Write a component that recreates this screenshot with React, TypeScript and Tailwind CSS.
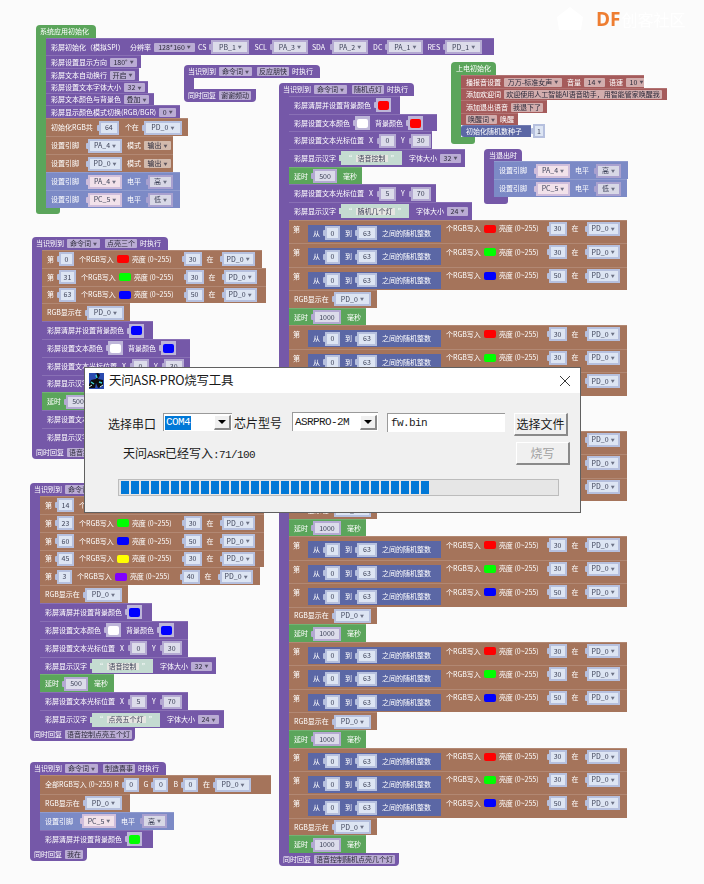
import React from 'react';

const tones = {
  violet: ['bg-[#b4a9d2]', 'bg-[#dcdcea]'],
  ice: ['bg-[#b6c0de]', 'bg-[#dde5f3]'],
  pink: ['bg-[#d0bedb]', 'bg-[#f2e2ea]'],
  lilac: ['bg-[#a9a1cf]', 'bg-[#d8d8e6]'],
  mint: ['bg-[#c4dbd1]', 'bg-[#e6e6e2]'],
};

type Tone = keyof typeof tones;

const L = ({ children, cls = '' }: { children: React.ReactNode; cls?: string }) => (
  <span className={`text-white text-[7px] leading-none whitespace-nowrap shrink-0 ${cls}`}>{children}</span>
);

const Arrow = () => <span className="text-[4px] leading-none opacity-70">▼</span>;

// plain dropdown sitting right on the block
const Dd = ({ t, cls = '', arrow = true }: { t: string; cls?: string; arrow?: boolean }) => (
  <span className={`flex items-center justify-center gap-[2px] h-[9px] px-[2px] rounded-[1px] bg-white/50 text-[#2c2a3a] text-[7px] leading-none whitespace-nowrap shrink-0 ${cls}`}>
    {t}
    {arrow && <Arrow />}
  </span>
);

// plugged in shadow block with its inner field
const Sh = ({ t, cls = 'w-[16px]', tone = 'ice', arrow = false }: { t: string; cls?: string; tone?: Tone; arrow?: boolean }) => (
  <span className="flex items-center shrink-0">
    <span className={`w-[2px] h-[6px] rounded-l-[1px] ${tones[tone][0]}`} />
    <span className={`flex items-center justify-center h-[14px] px-[2px] ${tones[tone][0]} ${cls}`}>
      <span className={`flex items-center justify-center gap-[2px] w-full h-[10px] text-[#3d4258] text-[7px] leading-none whitespace-nowrap ${tones[tone][1]}`}>
        {t}
        {arrow && <Arrow />}
      </span>
    </span>
  </span>
);

const Swatch = ({ c }: { c: string }) => <span className={`w-[12px] h-[8px] rounded-[2px] shrink-0 ${c}`} />;

const Picked = ({ c }: { c: string }) => (
  <span className="flex items-center shrink-0">
    <span className="w-[2px] h-[6px] rounded-l-[1px] bg-[#bdb5d8]" />
    <span className="flex items-center justify-center w-[15px] h-[14px] bg-[#bdb5d8]">
      <span className={`w-[11px] h-[9px] rounded-[2px] ${c}`} />
    </span>
  </span>
);

const Row = ({ cls, children }: { cls: string; children: React.ReactNode }) => (
  <div className={`flex items-center gap-[3px] pl-[5px] shrink-0 border-t border-white/15 ${cls}`}>{children}</div>
);

const Clear = ({ c, cls }: { c: string; cls: string }) => (
  <Row cls={`bg-[#7558a8] ${cls}`}>
    <L>彩屏清屏并设置背景颜色</L>
    <Picked c={c} />
  </Row>
);

const TextColor = ({ c, cls }: { c: string; cls: string }) => (
  <Row cls={`bg-[#7558a8] ${cls}`}>
    <L>彩屏设置文本颜色</L>
    <Picked c="bg-white" />
    <L cls="ml-[2px]">背景颜色</L>
    <Picked c={c} />
  </Row>
);

const Cursor = ({ x, y, cls }: { x: string; y: string; cls: string }) => (
  <Row cls={`bg-[#7558a8] ${cls}`}>
    <L>彩屏设置文本光标位置</L>
    <L cls="ml-[2px] mr-[1px]">X</L>
    <Sh t={x} tone="violet" cls="w-[17px]" />
    <L cls="ml-[2px] mr-[1px]">Y</L>
    <Sh t={y} tone="violet" cls="w-[20px]" />
  </Row>
);

const Han = ({ t, size, w, cls }: { t: string; size: string; w: string; cls: string }) => (
  <Row cls={`bg-[#7558a8] ${cls}`}>
    <L>彩屏显示汉字</L>
    <span className="flex items-center shrink-0">
      <span className="w-[2px] h-[6px] bg-[#c4dbd1]" />
      <span className={`flex items-center justify-between h-[14px] px-[4px] bg-[#c4dbd1] text-white text-[7px] leading-none ${w}`}>
        “<span className="px-[2px] bg-[#e6e6e2] text-[#3d4258] whitespace-nowrap">{t}</span>”
      </span>
    </span>
    <L cls="ml-[4px]">字体大小</L>
    <Dd t={size} cls="w-[21px]" />
  </Row>
);

const Delay = ({ t, w, cls }: { t: string; w: string; cls: string }) => (
  <Row cls={`bg-[#5ba55b] ${cls}`}>
    <L>延时</L>
    <Sh t={t} tone="violet" cls={w} />
    <L cls="ml-[3px]">毫秒</L>
  </Row>
);

const RgbShow = ({ cls }: { cls: string }) => (
  <Row cls={`bg-[#a5745b] ${cls}`}>
    <L>RGB显示在</L>
    <Sh t="PD_0" cls="w-[37px]" arrow />
  </Row>
);

const Pin = ({ p, lv, cls }: { p: string; lv: string; cls: string }) => (
  <Row cls={`bg-[#7c8ac6] ${cls}`}>
    <L cls="mr-[4px]">设置引脚</L>
    <Sh t={p} tone="pink" cls="w-[34px]" arrow />
    <L cls="ml-[2px] mr-[2px]">电平</L>
    <Sh t={lv} tone="lilac" cls="w-[25px]" arrow />
  </Row>
);

const Mode = ({ p, cls }: { p: string; cls: string }) => (
  <Row cls={`bg-[#a5745b] ${cls}`}>
    <L cls="mr-[4px]">设置引脚</L>
    <Sh t={p} cls="w-[34px]" arrow />
    <L cls="ml-[2px]">模式</L>
    <Dd t="输出" cls="w-[27px]" />
  </Row>
);

const Led = ({ n, c, v, w = 'w-[17px]', cls }: { n: string; c: string; v: string; w?: string; cls: string }) => (
  <Row cls={`bg-[#a5745b] ${cls}`}>
    <L>第</L>
    <Sh t={n} cls={w} />
    <L cls="ml-[2px]">个RGB写入</L>
    <Swatch c={c} />
    <L cls="mr-[7px]">亮度 (0~255)</L>
    <Sh t={v} cls="w-[18px]" />
    <L cls="ml-[2px] mr-[3px]">在</L>
    <Sh t="PD_0" cls="w-[33px]" arrow />
  </Row>
);

const Rand = ({ c, v }: { c: string; v: string }) => (
  <div className="flex items-start w-[338px] h-[23.4px] pl-[4px] pt-[4px] shrink-0 bg-[#a5745b] border-t border-white/15">
    <L cls="w-[15px] pt-[1px]">第</L>
    <div className="flex items-center gap-[3px] w-[133px] h-[17px] pl-[5px] shrink-0 bg-[#5b67a5]">
      <L>从</L>
      <Sh t="0" cls="w-[15px]" />
      <L cls="ml-[2px]">到</L>
      <Sh t="63" cls="w-[20px]" />
      <L cls="ml-[2px]">之间的随机整数</L>
    </div>
    <div className="flex items-center gap-[3px] pl-[5px] -mt-[3px]">
      <L>个RGB写入</L>
      <Swatch c={c} />
      <L cls="mr-[5px]">亮度 (0~255)</L>
      <Sh t={v} cls="w-[18px]" />
      <L cls="ml-[2px] mr-[3px]">在</L>
      <Sh t="PD_0" cls="w-[33px]" arrow />
    </div>
  </div>
);

const RandGroup = () => (
  <>
    <Rand c="bg-[#ff0000]" v="30" />
    <Rand c="bg-[#00ff00]" v="30" />
    <Rand c="bg-[#0000ff]" v="50" />
    <RgbShow cls="w-[88px] h-[17.7px]" />
    <Delay t="1000" w="w-[28px]" cls="w-[77px] h-[17.7px]" />
  </>
);

const Stack = ({ pos, color, head, foot, children }: {
  pos: string;
  color: string;
  head: React.ReactNode;
  foot: React.ReactNode;
  children: React.ReactNode;
}) => (
  <div className={`absolute flex flex-col items-start ${pos}`}>
    {head}
    <div className="flex items-stretch">
      <div className={`w-[10px] shrink-0 ${color}`} />
      <div className="flex flex-col items-start">{children}</div>
    </div>
    {foot}
  </div>
);

const Head = ({ cmd, act, cls }: { cmd: string; act: string; cls: string }) => (
  <div className={`flex items-center gap-[3px] pl-[4px] h-[13px] rounded-t-[4px] bg-[#7558a8] ${cls}`}>
    <L>当识别到</L>
    <Dd t={cmd} cls="w-[33px]" />
    <Dd t={act} arrow={false} cls="ml-[2px]" />
    <L>时执行</L>
  </div>
);

const Foot = ({ t, cls }: { t: string; cls: string }) => (
  <div className={`flex items-center gap-[3px] pl-[4px] h-[13px] rounded-b-[4px] bg-[#7558a8] ${cls}`}>
    <L>同时回复</L>
    <Dd t={t} arrow={false} />
  </div>
);

const RaisedArrow = ({ cls }: { cls: string }) => (
  <span className={`flex items-center justify-center h-[15px] bg-[#f0f0f0] border-t border-l border-white border-r-2 border-b-2 border-r-[#8a8a8a] border-b-[#8a8a8a] shrink-0 ${cls}`}>
    <span className="w-0 h-0 border-x-[4px] border-x-transparent border-t-[4px] border-t-black" />
  </span>
);

const Burner = () => (
  <div className="absolute left-[84px] top-[367px] flex flex-col w-[497px] h-[146px] bg-[#f0f0f0] border border-[#606060] font-['Noto_Sans_CJK_SC','Noto_Sans',sans-serif] text-[#1a1a1a]">
    <div className="flex items-center h-[25px] pl-[3px] pr-[10px] bg-white shrink-0">
      <svg viewBox="0 0 16 16" className="w-[16px] h-[16px] shrink-0">
        <rect x="1" y="0" width="15" height="16" fill="#2b4bb0" />
        <path d="M7 1 L9 1 L8 6 L3 7 L1 12 L1 15 L7 15 L8 10 L10 15 L15 13 L15 7 L10 6 L12 2 L10 0 Z" fill="#0c0c0c" />
        <path d="M3 9 L6 11 M11 9 L14 10 M8 2 L9 5" stroke="#3fd6d6" strokeWidth="1.4" />
        <path d="M1 14 L4 12 M12 14 L15 12" stroke="#d8f4f4" strokeWidth="1" />
      </svg>
      <span className="ml-[5px] text-[12.5px] tracking-[-0.2px] leading-none whitespace-nowrap">天问ASR-PRO烧写工具</span>
      <svg viewBox="0 0 10 10" className="ml-auto w-[10px] h-[10px] shrink-0" stroke="#222" strokeWidth="0.9" fill="none">
        <path d="M0 0 L10 10 M10 0 L0 10" />
      </svg>
    </div>
    <div className="flex items-start h-[24px] mt-[20px] pl-[23px]">
      <span className="w-[55px] mt-[2px] text-[12px] leading-[18px] shrink-0">选择串口</span>
      <div className="flex items-center justify-between w-[69px] h-[18px] pl-[1px] pr-[1px] bg-white border-t border-l border-[#9a9a9a] shrink-0">
        <span className="flex items-center w-[26px] h-[14px] pl-[1px] bg-[#0078d7] text-white font-['Liberation_Mono',monospace] text-[11px] tracking-[-0.6px] leading-none">COM4</span>
        <RaisedArrow cls="w-[17px]" />
      </div>
      <span className="w-[58px] ml-[2px] mt-[1px] text-[12px] leading-[18px] shrink-0">芯片型号</span>
      <div className="flex items-center justify-between w-[86px] h-[19px] pl-[2px] pr-[1px] bg-white border-t border-l border-[#9a9a9a] shrink-0 -mt-[1px]">
        <span className="font-['Liberation_Mono',monospace] text-[11px] tracking-[-0.6px] leading-none">ASRPRO-2M</span>
        <RaisedArrow cls="w-[17px]" />
      </div>
      <div className="flex items-center w-[118px] h-[19px] ml-[9px] pl-[3px] bg-white border-t border-l border-[#9a9a9a] font-['Liberation_Mono',monospace] text-[11px] tracking-[-0.6px] leading-none shrink-0">fw.bin</div>
      <button className="flex items-center justify-center w-[54px] h-[23px] ml-[9px] bg-[#f0f0f0] border-t border-l border-white border-r-2 border-b-2 border-r-[#8a8a8a] border-b-[#8a8a8a] text-[12px] leading-none shrink-0">选择文件</button>
    </div>
    <div className="flex items-start h-[23px] mt-[5px] pl-[38px]">
      <span className="w-[393px] mt-[2px] text-[12px] leading-[18px] whitespace-nowrap shrink-0">
        天问<span className="font-['Liberation_Mono',monospace] text-[11px] tracking-[-0.6px]">ASR</span>已经写入<span className="font-['Liberation_Mono',monospace] text-[11px] tracking-[-0.6px]">:71/100</span>
      </span>
      <button className="flex items-center justify-center w-[54px] h-[23px] bg-[#f0f0f0] border-t border-l border-white border-r-2 border-b-2 border-r-[#8a8a8a] border-b-[#8a8a8a] text-[#a0a0a0] text-[12px] leading-none shrink-0">烧写</button>
    </div>
    <div className="flex items-center gap-[2px] w-[441px] h-[17px] mt-[14px] ml-[33px] pl-[2px] bg-[#e6e6e6] border border-[#bcbcbc] shrink-0">
      {Array.from({ length: 31 }).map((_, i) => (
        <span key={i} className="w-[8px] h-[13px] bg-[#0078d7] shrink-0" />
      ))}
    </div>
  </div>
);

export default function App() {
  return (
    <div className="relative w-[704px] h-[884px] overflow-hidden bg-[#fbfbfb] font-['Noto_Sans_CJK_SC','Noto_Sans',sans-serif]">
      <div className="blur-[0.4px]">
        {/* system init */}
        <Stack
          pos="left-[36px] top-[25px]"
          color="bg-[#5ba55b]"
          head={
            <div className="flex items-center w-[60px] h-[13px] pl-[4px] rounded-t-[4px] bg-[#5ba55b]">
              <L>系统应用初始化</L>
            </div>
          }
          foot={<div className="w-[24px] h-[6px] rounded-b-[3px] bg-[#5ba55b]" />}
        >
          <Row cls="w-[448px] h-[17px] bg-[#7558a8]">
            <L cls="w-[74px]">彩屏初始化（模拟SPI）</L>
            <L cls="ml-[2px]">分辨率</L>
            <Dd t="128*160" cls="w-[41px]" />
            <L>CS</L>
            <Sh t="PB_1" tone="violet" cls="w-[38px]" arrow />
            <L cls="ml-[2px]">SCL</L>
            <Sh t="PA_3" tone="violet" cls="w-[36px]" arrow />
            <L cls="ml-[1px] mr-[2px]">SDA</L>
            <Sh t="PA_2" tone="violet" cls="w-[36px]" arrow />
            <L cls="ml-[2px]">DC</L>
            <Sh t="PA_1" tone="violet" cls="w-[36px]" arrow />
            <L cls="ml-[1px]">RES</L>
            <Sh t="PD_1" tone="violet" cls="w-[37px]" arrow />
          </Row>
          <Row cls="w-[95px] h-[13px] bg-[#7558a8]">
            <L>彩屏设置显示方向</L>
            <Dd t="180°" cls="w-[27px]" />
          </Row>
          <Row cls="w-[93px] h-[13px] bg-[#7558a8]">
            <L>彩屏文本自动换行</L>
            <Dd t="开启" cls="w-[25px]" />
          </Row>
          <Row cls="w-[102px] h-[12px] bg-[#7558a8]">
            <L>彩屏设置文本字体大小</L>
            <Dd t="32" cls="w-[21px]" />
          </Row>
          <Row cls="w-[108px] h-[12px] bg-[#7558a8]">
            <L>彩屏文本颜色与背景色</L>
            <Dd t="叠加" cls="w-[25px]" />
          </Row>
          <Row cls="w-[134px] h-[13px] bg-[#7558a8]">
            <L>彩屏显示颜色模式切换(RGB/BGR)</L>
            <Dd t="0" cls="w-[17px]" />
          </Row>
          <Row cls="w-[142px] h-[18px] bg-[#a5745b]">
            <L cls="mr-[1px]">初始化RGB共</L>
            <Sh t="64" cls="w-[20px]" />
            <L cls="ml-[3px]">个在</L>
            <Sh t="PD_0" cls="w-[38px]" arrow />
          </Row>
          <Mode p="PA_4" cls="w-[127px] h-[18px]" />
          <Mode p="PD_0" cls="w-[127px] h-[18px]" />
          <Pin p="PA_4" lv="高" cls="w-[134px] h-[18px]" />
          <Pin p="PC_5" lv="低" cls="w-[134px] h-[18px]" />
        </Stack>

        {/* empty voice command */}
        <Stack
          pos="left-[184px] top-[65px]"
          color="bg-[#7558a8]"
          head={<Head cmd="命令词" act="反应朋快" cls="w-[136px]" />}
          foot={<Foot t="谢谢频动" cls="w-[72px]" />}
        >
          <div className="h-[11px]" />
        </Stack>

        {/* random lights */}
        <Stack
          pos="left-[279px] top-[83px]"
          color="bg-[#7558a8]"
          head={<Head cmd="命令词" act="随机点灯" cls="w-[135px]" />}
          foot={<Foot t="语音控制随机点亮几个灯" cls="w-[120px]" />}
        >
          <Clear c="bg-[#ff0000]" cls="w-[111px] h-[17.7px]" />
          <TextColor c="bg-[#ff0000]" cls="w-[148px] h-[17.7px]" />
          <Cursor x="0" y="30" cls="w-[143px] h-[17.7px]" />
          <Han t="语音控制" size="32" w="w-[61px]" cls="w-[176px] h-[17.7px]" />
          <Delay t="500" w="w-[24px]" cls="w-[73px] h-[17.7px]" />
          <Cursor x="5" y="70" cls="w-[147px] h-[17.7px]" />
          <Han t="随机几个灯" size="24" w="w-[68px]" cls="w-[183px] h-[17.7px]" />
          <RandGroup />
          <RandGroup />
          <RandGroup />
          <RandGroup />
          <RandGroup />
          <RandGroup />
        </Stack>

        {/* power on */}
        <Stack
          pos="left-[451px] top-[62px]"
          color="bg-[#5ba55b]"
          head={
            <div className="flex items-center w-[45px] h-[13px] pl-[5px] rounded-t-[4px] bg-[#5ba55b]">
              <L>上电初始化</L>
            </div>
          }
          foot={<div className="w-[24px] h-[7px] rounded-b-[3px] bg-[#5ba55b]" />}
        >
          <Row cls="w-[183px] h-[13px] bg-[#a55b5b]">
            <L>播报音设置</L>
            <Dd t="万万-标准女声" cls="w-[58px]" />
            <L cls="ml-[2px]">音量</L>
            <Dd t="14" cls="w-[21px]" />
            <L cls="ml-[1px]">语速</L>
            <Dd t="10" cls="w-[21px]" />
          </Row>
          <Row cls="w-[206px] h-[12px] bg-[#a55b5b]">
            <L>添加欢迎词</L>
            <Dd t="欢迎使用人工智能AI语音助手，用智能管家唤醒我" arrow={false} cls="w-[158px]" />
          </Row>
          <Row cls="w-[86px] h-[13px] bg-[#a55b5b]">
            <L>添加退出语音</L>
            <Dd t="我退下了" arrow={false} />
          </Row>
          <Row cls="w-[57px] h-[12px] pl-[2px] bg-[#a55b5b]">
            <Dd t="唤醒词" cls="w-[31px]" />
            <L>唤醒</L>
          </Row>
          <div className="flex items-center h-[12px] shrink-0">
            <Row cls="w-[70px] h-[12px] pl-[4px] rounded-l-[3px] bg-[#5b67a5]">
              <L>初始化随机数种子</L>
            </Row>
            <Sh t="1" cls="w-[12px]" />
          </div>
        </Stack>

        {/* on exit */}
        <Stack
          pos="left-[484px] top-[149px]"
          color="bg-[#7558a8]"
          head={
            <div className="flex items-center w-[38px] h-[12px] pl-[5px] rounded-t-[4px] bg-[#7558a8]">
              <L>当退出时</L>
            </div>
          }
          foot={<div className="w-[24px] h-[7px] rounded-b-[3px] bg-[#7558a8]" />}
        >
          <Pin p="PA_4" lv="高" cls="w-[134px] h-[18px]" />
          <Pin p="PC_5" lv="低" cls="w-[133px] h-[18px]" />
        </Stack>

        {/* three lights */}
        <Stack
          pos="left-[32px] top-[237px]"
          color="bg-[#7558a8]"
          head={<Head cmd="命令词" act="点亮三个" cls="w-[136px] h-[12px]" />}
          foot={<Foot t="语音控制点亮三个灯" cls="w-[110px] h-[12px]" />}
        >
          <Led n="0" c="bg-[#ff0000]" v="30" w="w-[15px]" cls="w-[220px] h-[17.8px]" />
          <Led n="31" c="bg-[#00ff00]" v="30" cls="w-[224px] h-[17.8px]" />
          <Led n="63" c="bg-[#0000ff]" v="50" cls="w-[224px] h-[17.8px]" />
          <RgbShow cls="w-[88px] h-[17.8px]" />
          <Clear c="bg-[#0000ff]" cls="w-[111px] h-[17.8px]" />
          <TextColor c="bg-[#0000ff]" cls="w-[148px] h-[17.8px]" />
          <Cursor x="0" y="30" cls="w-[148px] h-[17.8px]" />
          <Han t="语音控制" size="32" w="w-[61px]" cls="w-[176px] h-[17.8px]" />
          <Delay t="500" w="w-[24px]" cls="w-[73px] h-[17.8px]" />
          <Cursor x="5" y="70" cls="w-[147px] h-[17.8px]" />
          <Han t="点亮三个灯" size="24" w="w-[68px]" cls="w-[183px] h-[17.8px]" />
        </Stack>

        {/* five lights */}
        <Stack
          pos="left-[30px] top-[483px]"
          color="bg-[#7558a8]"
          head={<Head cmd="命令词" act="点亮五个" cls="w-[136px]" />}
          foot={<Foot t="语音控制点亮五个灯" cls="w-[105px]" />}
        >
          <Led n="14" c="bg-[#ff0000]" v="30" cls="w-[224px] h-[17.85px]" />
          <Led n="23" c="bg-[#00ff00]" v="30" cls="w-[224px] h-[17.85px]" />
          <Led n="60" c="bg-[#0000ff]" v="50" cls="w-[224px] h-[17.85px]" />
          <Led n="45" c="bg-[#ffff00]" v="30" cls="w-[224px] h-[17.85px]" />
          <Led n="3" c="bg-[#8000ff]" v="40" w="w-[15px]" cls="w-[220px] h-[17.85px]" />
          <RgbShow cls="w-[88px] h-[17.85px]" />
          <Clear c="bg-[#0000ff]" cls="w-[112px] h-[17.85px]" />
          <TextColor c="bg-[#0000ff]" cls="w-[148px] h-[17.85px]" />
          <Cursor x="0" y="30" cls="w-[148px] h-[17.85px]" />
          <Han t="语音控制" size="32" w="w-[61px]" cls="w-[176px] h-[17.85px]" />
          <Delay t="500" w="w-[24px]" cls="w-[74px] h-[17.85px]" />
          <Cursor x="5" y="70" cls="w-[148px] h-[17.85px]" />
          <Han t="点亮五个灯" size="24" w="w-[68px]" cls="w-[184px] h-[17.85px]" />
        </Stack>

        {/* all off */}
        <Stack
          pos="left-[30px] top-[762px]"
          color="bg-[#7558a8]"
          head={<Head cmd="命令词" act="制造喜事" cls="w-[136px] h-[11px]" />}
          foot={<Foot t="我在" cls="w-[57px]" />}
        >
          <Row cls="w-[231px] h-[18.5px] bg-[#a5745b]">
            <L>全部RGB写入 (0~255) R</L>
            <Sh t="0" cls="w-[15px]" />
            <L cls="ml-[2px]">G</L>
            <Sh t="0" cls="w-[15px]" />
            <L cls="ml-[2px]">B</L>
            <Sh t="0" cls="w-[15px]" />
            <L cls="ml-[2px]">在</L>
            <Sh t="PD_0" cls="w-[36px]" arrow />
          </Row>
          <RgbShow cls="w-[90px] h-[18px]" />
          <Pin p="PC_5" lv="高" cls="w-[134px] h-[18px]" />
          <Clear c="bg-[#00ff00]" cls="w-[113px] h-[18px]" />
        </Stack>

        {/* watermark */}
        <div className="absolute left-[555px] top-[4px] flex items-center">
          <svg viewBox="0 0 30 30" className="w-[30px] h-[30px]">
            <path d="M15 3 L28 13 L26 26 L4 26 L2 13 Z" fill="#ffffff" />
          </svg>
          <span className="ml-[11px] text-[#ee7d31] text-[19px] font-bold leading-none font-['Open_Sans',sans-serif]">DF</span>
          <span className="ml-[1px] text-white text-[16px] leading-none whitespace-nowrap">创客社区</span>
        </div>

        <Burner />
      </div>
    </div>
  );
}
